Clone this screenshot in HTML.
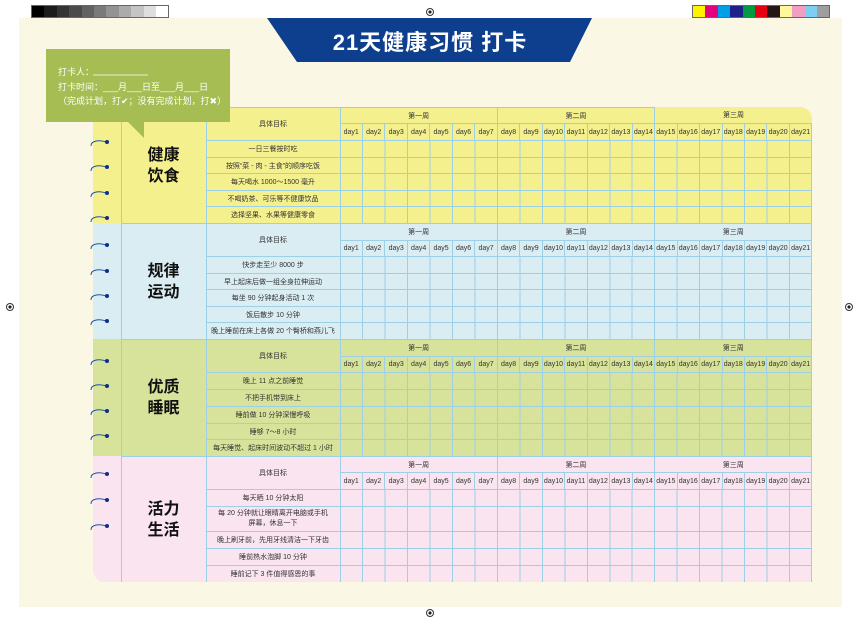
<!DOCTYPE html>
<html><head><meta charset="utf-8">
<style>
*{margin:0;padding:0;box-sizing:border-box}
body{width:860px;height:625px;background:#fff;position:relative;overflow:hidden;font-family:"Liberation Sans","Noto Sans CJK SC",sans-serif}
.cream{position:absolute;left:19px;top:18px;width:823px;height:589px;background:#faf7e5}
.bar{position:absolute;top:5px;height:13px;display:flex;border:1px solid #666}
.bar span{width:12.4px;height:100%}
.sec{position:absolute;left:93px;width:719px;overflow:hidden}
table{border-collapse:collapse;table-layout:fixed;width:719px;position:absolute;left:0;top:0}
td{border:1px solid #9dcfe6;font-size:7px;color:#333;text-align:center;padding:0;overflow:hidden;white-space:nowrap}
td.ring{border:none}
td.lab{font-size:16px;font-weight:bold;color:#111;line-height:21px;border-left:1px solid #9dcfe6}
td.g{background-image:repeating-linear-gradient(to right,transparent 0 21.48px,#9dcfe6 21.48px 22.48px)}
td.wk{font-size:7px}
.reg{position:absolute;width:8px;height:8px;border-radius:50%;border:1px solid #333;background:radial-gradient(#222 35%,#fff 40%)}
</style></head><body>
<div class="bar" style="left:31px"><span style="background:#000"></span><span style="background:#1c1c1c"></span><span style="background:#333"></span><span style="background:#4a4a4a"></span><span style="background:#626262"></span><span style="background:#7a7a7a"></span><span style="background:#939393"></span><span style="background:#ababab"></span><span style="background:#c4c4c4"></span><span style="background:#dedede"></span><span style="background:#fff"></span></div>
<div class="bar" style="left:692px"><span style="background:#fff200"></span><span style="background:#e4007f"></span><span style="background:#00a0e9"></span><span style="background:#1d2088"></span><span style="background:#009944"></span><span style="background:#e60012"></span><span style="background:#231815"></span><span style="background:#fff799"></span><span style="background:#f19ec2"></span><span style="background:#7ecef4"></span><span style="background:#9e9e9e"></span></div>
<div class="reg" style="left:426px;top:8px"></div>
<div class="reg" style="left:426px;top:609px"></div>
<div class="reg" style="left:6px;top:303px"></div>
<div class="reg" style="left:845px;top:303px"></div>
<div class="cream"></div>

<svg style="position:absolute;left:0;top:0" width="860" height="625">
<polygon points="267,18 592,18 570,62 297,62" fill="#0e3e8e"/>
<text x="430" y="50" text-anchor="middle" fill="#fff" font-size="22" font-weight="bold" font-family="Liberation Sans,Noto Sans CJK SC,sans-serif" letter-spacing="1">21天健康习惯 打卡</text>
</svg>

<div class="sec" style="top:107px;height:116px;background:#f5f08e;border-radius:0 12px 0 0">
<table><colgroup><col style="width:28px"><col style="width:85px"><col style="width:134px"><col span="21" style="width:22.476px"></colgroup>
<tr style="height:16px"><td class="ring" rowspan="7"></td><td class="lab" rowspan="7">健康<br>饮食</td><td rowspan="2">具体目标</td><td class="wk" colspan="7">第一周</td><td class="wk" colspan="7">第二周</td><td class="wk" colspan="7" style="border-top:none;border-right:none">第三周</td></tr>
<tr style="height:17px"><td>day1</td><td>day2</td><td>day3</td><td>day4</td><td>day5</td><td>day6</td><td>day7</td><td>day8</td><td>day9</td><td>day10</td><td>day11</td><td>day12</td><td>day13</td><td>day14</td><td>day15</td><td>day16</td><td>day17</td><td>day18</td><td>day19</td><td>day20</td><td>day21</td></tr>
<tr style="height:17px"><td>一日三餐按时吃</td><td class="g" colspan="21"></td></tr>
<tr style="height:16px"><td>按照“菜 - 肉 - 主食”的顺序吃饭</td><td class="g" colspan="21"></td></tr>
<tr style="height:17px"><td>每天喝水 1000～1500 毫升</td><td class="g" colspan="21"></td></tr>
<tr style="height:16px"><td>不喝奶茶、可乐等不健康饮品</td><td class="g" colspan="21"></td></tr>
<tr style="height:17px"><td>选择坚果、水果等健康零食</td><td class="g" colspan="21"></td></tr>
</table></div>

<div class="sec" style="top:223px;height:116px;background:#daedf3">
<table><colgroup><col style="width:28px"><col style="width:85px"><col style="width:134px"><col span="21" style="width:22.476px"></colgroup>
<tr style="height:17px"><td class="ring" rowspan="7"></td><td class="lab" rowspan="7">规律<br>运动</td><td rowspan="2">具体目标</td><td class="wk" colspan="7">第一周</td><td class="wk" colspan="7">第二周</td><td class="wk" colspan="7">第三周</td></tr>
<tr style="height:16px"><td>day1</td><td>day2</td><td>day3</td><td>day4</td><td>day5</td><td>day6</td><td>day7</td><td>day8</td><td>day9</td><td>day10</td><td>day11</td><td>day12</td><td>day13</td><td>day14</td><td>day15</td><td>day16</td><td>day17</td><td>day18</td><td>day19</td><td>day20</td><td>day21</td></tr>
<tr style="height:17px"><td>快步走至少 8000 步</td><td class="g" colspan="21"></td></tr>
<tr style="height:16px"><td>早上起床后做一组全身拉伸运动</td><td class="g" colspan="21"></td></tr>
<tr style="height:17px"><td>每坐 90 分钟起身活动 1 次</td><td class="g" colspan="21"></td></tr>
<tr style="height:16px"><td>饭后散步 10 分钟</td><td class="g" colspan="21"></td></tr>
<tr style="height:17px"><td>晚上睡前在床上各做 20 个臀桥和燕儿飞</td><td class="g" colspan="21"></td></tr>
</table></div>

<div class="sec" style="top:339px;height:117px;background:#d7e39b">
<table><colgroup><col style="width:28px"><col style="width:85px"><col style="width:134px"><col span="21" style="width:22.476px"></colgroup>
<tr style="height:17px"><td class="ring" rowspan="7"></td><td class="lab" rowspan="7">优质<br>睡眠</td><td rowspan="2">具体目标</td><td class="wk" colspan="7">第一周</td><td class="wk" colspan="7">第二周</td><td class="wk" colspan="7">第三周</td></tr>
<tr style="height:16px"><td>day1</td><td>day2</td><td>day3</td><td>day4</td><td>day5</td><td>day6</td><td>day7</td><td>day8</td><td>day9</td><td>day10</td><td>day11</td><td>day12</td><td>day13</td><td>day14</td><td>day15</td><td>day16</td><td>day17</td><td>day18</td><td>day19</td><td>day20</td><td>day21</td></tr>
<tr style="height:17px"><td>晚上 11 点之前睡觉</td><td class="g" colspan="21"></td></tr>
<tr style="height:17px"><td>不把手机带到床上</td><td class="g" colspan="21"></td></tr>
<tr style="height:17px"><td>睡前做 10 分钟深慢呼吸</td><td class="g" colspan="21"></td></tr>
<tr style="height:16px"><td>睡够 7～8 小时</td><td class="g" colspan="21"></td></tr>
<tr style="height:17px"><td>每天睡觉、起床时间波动不超过 1 小时</td><td class="g" colspan="21"></td></tr>
</table></div>

<div class="sec" style="top:456px;height:126px;background:#f9e4ef;border-radius:0 0 0 12px">
<table><colgroup><col style="width:28px"><col style="width:85px"><col style="width:134px"><col span="21" style="width:22.476px"></colgroup>
<tr style="height:16px"><td class="ring" rowspan="7"></td><td class="lab" rowspan="7">活力<br>生活</td><td rowspan="2">具体目标</td><td class="wk" colspan="7">第一周</td><td class="wk" colspan="7">第二周</td><td class="wk" colspan="7">第三周</td></tr>
<tr style="height:17px"><td>day1</td><td>day2</td><td>day3</td><td>day4</td><td>day5</td><td>day6</td><td>day7</td><td>day8</td><td>day9</td><td>day10</td><td>day11</td><td>day12</td><td>day13</td><td>day14</td><td>day15</td><td>day16</td><td>day17</td><td>day18</td><td>day19</td><td>day20</td><td>day21</td></tr>
<tr style="height:17px"><td>每天晒 10 分钟太阳</td><td class="g" colspan="21"></td></tr>
<tr style="height:25px"><td style="white-space:normal;line-height:10px">每 20 分钟就让眼睛离开电脑或手机<br>屏幕，休息一下</td><td class="g" colspan="21"></td></tr>
<tr style="height:17px"><td>晚上刷牙前，先用牙线清洁一下牙齿</td><td class="g" colspan="21"></td></tr>
<tr style="height:17px"><td>睡前热水泡脚 10 分钟</td><td class="g" colspan="21"></td></tr>
<tr style="height:17px"><td style="border-bottom:none">睡前记下 3 件值得感恩的事</td><td class="g" colspan="21" style="border-bottom:none"></td></tr>
</table></div>

<svg style="position:absolute;left:0;top:0" width="860" height="625">
<g fill="none" stroke="#1b4fa0" stroke-width="1">
<path d="M91,146 C91,140 100,140 106,142"/><path d="M91,171 C91,165 100,165 106,167"/><path d="M91,197 C91,191 100,191 106,193"/><path d="M91,222 C91,216 100,216 106,218"/>
<path d="M91,249 C91,243 100,243 106,245"/><path d="M91,275 C91,269 100,269 106,271"/><path d="M91,300 C91,294 100,294 106,296"/><path d="M91,325 C91,319 100,319 106,321"/>
<path d="M91,365 C91,359 100,359 106,361"/><path d="M91,390 C91,384 100,384 106,386"/><path d="M91,415 C91,409 100,409 106,411"/><path d="M91,440 C91,434 100,434 106,436"/>
<path d="M91,478 C91,472 100,472 106,474"/><path d="M91,504 C91,498 100,498 106,500"/><path d="M91,530 C91,524 100,524 106,526"/>
</g>
<g fill="#0d2e8a">
<circle cx="107" cy="142" r="2"/><circle cx="107" cy="167" r="2"/><circle cx="107" cy="193" r="2"/><circle cx="107" cy="218" r="2"/>
<circle cx="107" cy="245" r="2"/><circle cx="107" cy="271" r="2"/><circle cx="107" cy="296" r="2"/><circle cx="107" cy="321" r="2"/>
<circle cx="107" cy="361" r="2"/><circle cx="107" cy="386" r="2"/><circle cx="107" cy="411" r="2"/><circle cx="107" cy="436" r="2"/>
<circle cx="107" cy="474" r="2"/><circle cx="107" cy="500" r="2"/><circle cx="107" cy="526" r="2"/>
</g>
<polygon points="46,49 230,49 230,122 144,122 144,138 128,122 46,122" fill="#a5bd52"/>
<g fill="#fff" font-size="9" font-family="Liberation Sans,Noto Sans CJK SC,sans-serif">
<text x="58" y="75">打卡人：</text>
<line x1="93" y1="75" x2="148" y2="75" stroke="#fff" stroke-width="0.7"/>
<text x="58" y="90">打卡时间：___月___日至___月___日</text>
<text x="58" y="104">（完成计划，打✔；没有完成计划，打✖）</text>
</g>
</svg>
</body></html>
